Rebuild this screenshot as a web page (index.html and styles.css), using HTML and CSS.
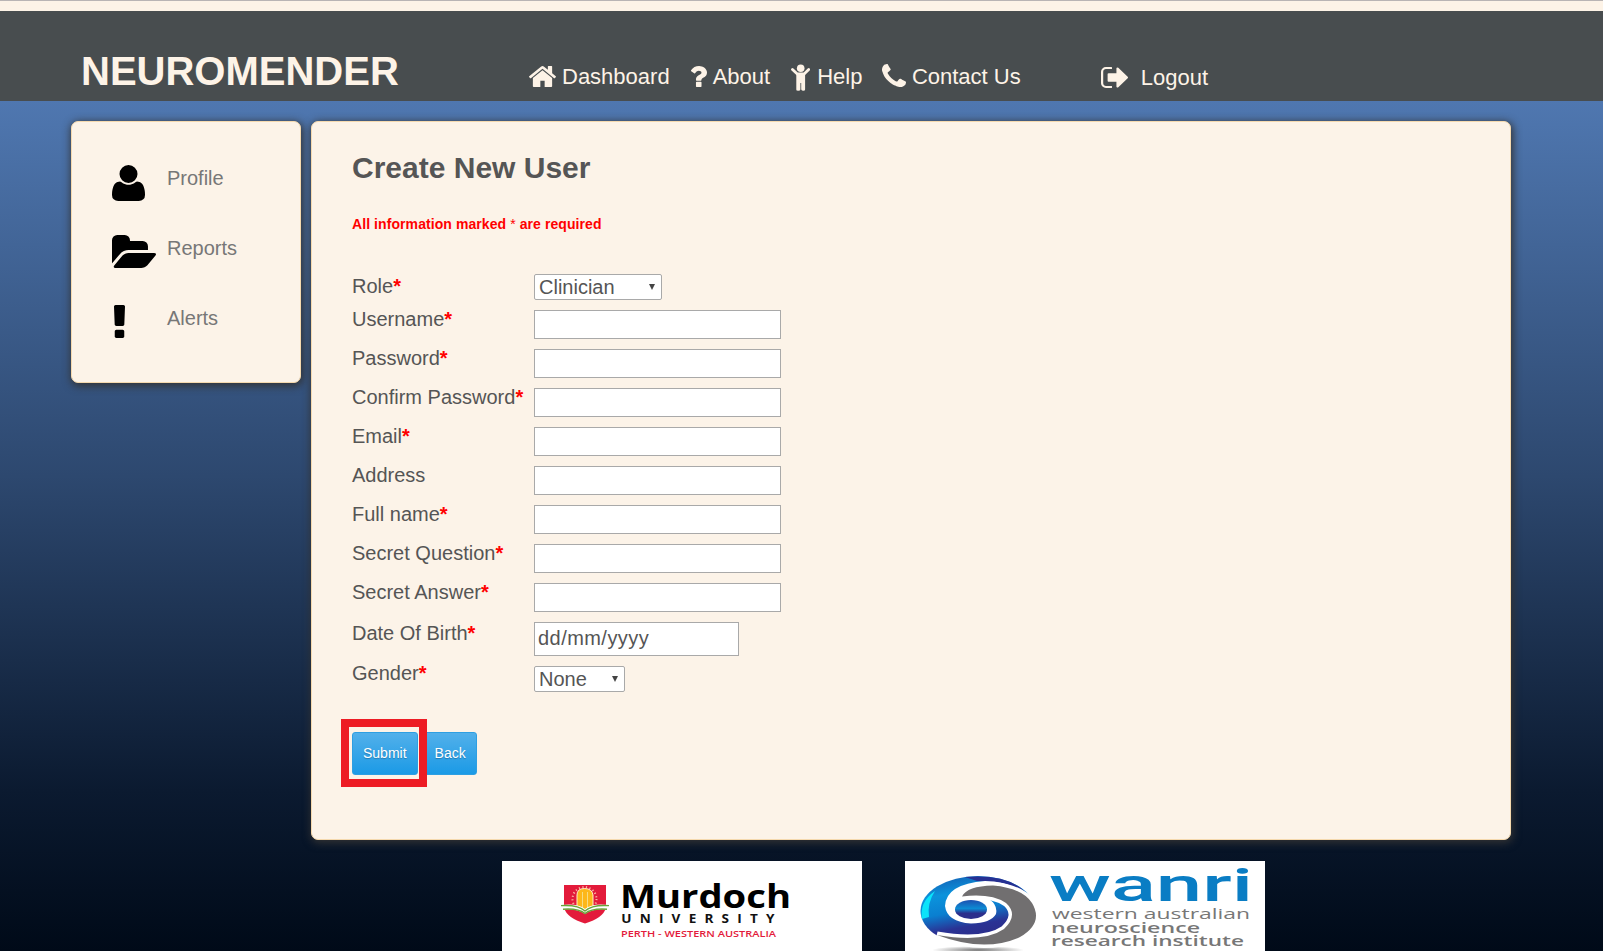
FILE: index.html
```html
<!DOCTYPE html>
<html lang="en">
<head>
<meta charset="utf-8">
<title>Neuromender - Create New User</title>
<link rel="stylesheet" href="styles.css">
</head>
<body>
<header class="header">
  <h1 class="brand">NEUROMENDER</h1>
  <nav class="nav">
    <a class="nav-item"><svg class="ico-home" viewBox="89 253 1614 1283" preserveAspectRatio="none"><path d="M1472 992v480q0 26-19 45t-45 19h-384v-384h-256v384h-384q-26 0-45-19t-19-45v-480q0-1 .5-3t.5-3l575-474 575 474q1 2 1 6zm223-69l-62 74q-8 9-21 11h-3q-13 0-21-7l-692-577-692 577q-12 8-24 7-13-2-21-11l-62-74q-8-10-7-23.5t11-21.5l719-599q32-26 76-26t76 26l244 204v-195q0-14 9-23t23-9h192q14 0 23 9t9 23v408l219 182q10 8 11 21.5t-7 23.5z"/></svg><span>Dashboard</span></a>
    <a class="nav-item"><svg class="ico-question" viewBox="482 256 922 1280" preserveAspectRatio="none"><path d="M1088 1256v240q0 16-12 28t-28 12h-240q-16 0-28-12t-12-28v-240q0-16 12-28t28-12h240q16 0 28 12t12 28zm316-600q0 54-15.500 101t-35 76.500-55 59.500-57.500 43.500-61 35.500q-41 23-68.500 65t-27.500 67q0 17-12 32.500t-28 15.500h-240q-15 0-25.500-18.500t-10.500-37.500v-45q0-83 65-156.500t143-108.500q59-27 84-56t25-76q0-42-46.500-74t-107.500-32q-65 0-108 29-35 25-107 115-13 16-31 16-12 0-25-8l-164-125q-13-10-15.500-25t5.500-28q160-266 464-266 80 0 161 31t146 83 106 127.500 41 158.500z"/></svg><span>About</span></a>
    <a class="nav-item"><svg class="ico-child" viewBox="0 0 19 27"><circle cx="9.700" cy="4.300" r="3.800"/><path d="M1.500 5.400 6.300 9.900H13.100L17.700 5.400" fill="none" stroke="#fdf3e7" stroke-width="2.800" stroke-linecap="round" stroke-linejoin="round"/><path d="M5.300 9H14.100V25.500Q14.100 26.700 12.400 26.700T10.200 25.500V19H9.400V25.500Q9.400 26.700 7.200 26.700T5.300 25.500Z"/></svg><span>Help</span></a>
    <a class="nav-item"><svg class="ico-phone" viewBox="192 128 1408 1408" preserveAspectRatio="none"><path d="M1600 1240q0 27-10 70.500t-21 68.500q-21 50-122 106-94 51-186 51-27 0-52.500-3.500t-57.500-12.500-47.500-14.500-55.500-20.500-49-18q-98-35-175-83-128-79-264.500-215.500t-215.500-264.500q-48-77-83-175-3-9-18-49t-20.500-55.500-14.500-47.500-12.500-57.500-3.500-52.500q0-92 51-186 56-101 106-122 25-11 68.500-21t70.500-10q14 0 21 3 18 6 53 76 11 19 30 54t35 63.500 31 53.500q3 4 17.500 25t21.500 35.500 7 28.500q0 20-28.500 50t-62 55-62 53-28.500 46q0 9 5 22.500t8.500 20.500 14 24 11.500 19q76 137 174 235t235 174q2 1 19 11.500t24 14 20.500 8.500 22.500 5q18 0 46-28.500t53-62 55-62 50-28.500q14 0 28.500 7t35.500 21.500 25 17.500q25 15 53.500 31t63.500 35 54 30q70 35 76 53 3 7 3 21z"/></svg><span>Contact Us</span></a>
    <a class="nav-item logout"><svg class="ico-out" viewBox="64 256 1568 1280" preserveAspectRatio="none"><path d="M704 1440q0 4 1 20t.5 26.500-3 23.500-10 19.500-20.500 6.500h-320q-119 0-203.500-84.500t-84.500-203.500v-704q0-119 84.500-203.500t203.500-84.500h320q13 0 22.500 9.500t9.500 22.500q0 4 1 20t.5 26.500-3 23.500-10 19.500-20.500 6.500h-320q-66 0-113 47t-47 113v704q0 66 47 113t113 47h312l11.500 1 11.500 3 8 5.500 7 9 2 13.500zm928-544q0 26-19 45l-544 544q-19 19-45 19t-45-19-19-45v-288h-448q-26 0-45-19t-19-45v-384q0-26 19-45t45-19h448v-288q0-26 19-45t45-19 45 19l544 544q19 19 19 45z"/></svg><span>Logout</span></a>
  </nav>
</header>

<div class="columns">
  <aside class="panel sidebar">
    <a class="side-item"><span class="side-icon"><svg class="ico-user" viewBox="192 128 1408 1536" preserveAspectRatio="none"><path d="M1600 1405q0 120-73 189.500t-194 69.500h-874q-121 0-194-69.500t-73-189.500q0-53 3.500-103.500t14-109 26.500-108.500 43-97.500 62-81 85.500-53.500 111.500-20q9 0 42 21.500t74.500 48 108 48 133.500 21.500 133.500-21.500 108-48 74.500-48 42-21.500q61 0 111.500 20t85.500 53.500 62 81 43 97.500 26.500 108.500 14 109 3.500 103.500zm-320-893q0 159-112.500 271.500t-271.500 112.500-271.500-112.500-112.500-271.500 112.500-271.500 271.500-112.500 271.500 112.500 112.500 271.500z"/></svg></span><span>Profile</span></a>
    <a class="side-item"><span class="side-icon"><svg class="ico-folder" viewBox="0 128 1879 1408" preserveAspectRatio="none"><path d="M1879 952q0 31-31 66l-336 396q-43 51-120.500 86.500t-143.500 35.500h-1088q-34 0-60.500-13t-26.500-43q0-31 31-66l336-396q43-51 120.500-86.500t143.500-35.500h1088q34 0 60.500 13t26.500 43z"/><path d="M1536 608v160h-832q-94 0-197 47.500t-164 119.500l-337 396-5 6q0-4-.5-12.500t-.5-12.500v-960q0-92 66-158t158-66h320q92 0 158 66t66 158v32h544q92 0 158 66t66 158z"/></svg></span><span>Reports</span></a>
    <a class="side-item"><span class="side-icon"><svg class="ico-alert" viewBox="674 128 444 1408" preserveAspectRatio="none"><path d="M1088 1248v224q0 26-19 45t-45 19h-256q-26 0-45-19t-19-45v-224q0-26 19-45t45-19h256q26 0 45 19t19 45zm30-1056l-28 768q-1 26-20.500 45t-45.500 19h-256q-26 0-45.500-19t-20.500-45l-28-768q-1-26 17.500-45t44.500-19h320q26 0 44.500 19t17.500 45z"/></svg></span><span>Alerts</span></a>
  </aside>

  <main class="panel main">
    <h2 class="title">Create New User</h2>
    <p class="notice">All information marked <span class="plain">*</span> are required</p>
    <form class="form">
      <div class="row role"><label>Role<b>*</b></label><div class="select">Clinician<svg viewBox="0 0 6 6"><path d="M0 0H6L3 6Z"/></svg></div></div>
      <div class="row"><label>Username<b>*</b></label><input class="text" type="text"></div>
      <div class="row"><label>Password<b>*</b></label><input class="text" type="password"></div>
      <div class="row"><label>Confirm Password<b>*</b></label><input class="text" type="password"></div>
      <div class="row"><label>Email<b>*</b></label><input class="text" type="text"></div>
      <div class="row"><label>Address</label><input class="text" type="text"></div>
      <div class="row"><label>Full name<b>*</b></label><input class="text" type="text"></div>
      <div class="row"><label>Secret Question<b>*</b></label><input class="text" type="text"></div>
      <div class="row"><label>Secret Answer<b>*</b></label><input class="text" type="text"></div>
      <div class="row dob"><label>Date Of Birth<b>*</b></label><div class="date">dd/mm/yyyy</div></div>
      <div class="row gender"><label>Gender<b>*</b></label><div class="select short">None<svg viewBox="0 0 6 6"><path d="M0 0H6L3 6Z"/></svg></div></div>
      <div class="buttons"><button class="btn marked" type="button">Submit</button><button class="btn" type="button">Back</button></div>
    </form>
  </main>
</div>

<footer class="logos">
  <svg class="logo" viewBox="0 0 360 120">
    <path d="M62 24H104V47Q101 57 83 62.500Q65 57 62 47Z" fill="#e31b3b"/>
    <circle cx="82.500" cy="38" r="12" fill="none" stroke="#f6b8a0" stroke-width="2" stroke-dasharray="1.200 2.400"/>
    <path d="M75 47V34Q75 27.500 82.500 27.500T91 34V47L83 51Z" fill="#fdb71a" stroke="#fff0c8" stroke-width="1"/>
    <path d="M80.500 31V47M85.500 31V47" stroke="#f7dc83" stroke-width="1"/>
    <path d="M59 44Q76 42 83 48Q90 42 107 44L105 48.500Q91 47 83 53Q75 47 61 48.500Z" fill="#fff"/>
    <path d="M59 44.600Q76 43.500 83 50Q90 43.500 107 44.600M61 48.200Q76 47 83 52.500Q90 47 105 48.200" fill="none" stroke="#6aa63a" stroke-width="1.400"/>
    <text class="murdoch" x="118" y="47" textLength="171" lengthAdjust="spacingAndGlyphs">Murdoch</text>
    <text class="university" x="101" y="62.500" textLength="130" lengthAdjust="spacing" transform="scale(1.180 1)">UNIVERSITY</text>
    <text class="perth" x="119" y="76" textLength="155" lengthAdjust="spacingAndGlyphs">PERTH - WESTERN AUSTRALIA</text>
  </svg>
  <svg class="logo" viewBox="0 0 360 120">
    <defs>
      <linearGradient id="iris" x1="0.200" y1="0" x2="0.500" y2="1"><stop offset="0" stop-color="#1560b4"/><stop offset=".25" stop-color="#0b93dc"/><stop offset=".5" stop-color="#0a7fd0"/><stop offset=".72" stop-color="#2a3294"/><stop offset="1" stop-color="#2c2a83"/></linearGradient>
      <linearGradient id="pupil" x1="0" y1="0" x2="0" y2="1"><stop offset="0" stop-color="#1d50b0"/><stop offset=".45" stop-color="#0c8bd4"/><stop offset=".7" stop-color="#2c2f8c"/></linearGradient>
      <radialGradient id="ground"><stop offset="0" stop-color="#777"/><stop offset="1" stop-color="#fff"/></radialGradient>
    </defs>
    <ellipse cx="73" cy="89" rx="46" ry="4" fill="url(#ground)"/>
    <ellipse cx="73" cy="50" rx="57.500" ry="35" fill="url(#iris)"/>
    <path d="M17 58Q14 41 30 30Q22 42 24 56Z" fill="#0be3fa"/>
    <path d="M60 16Q112 12 127 40Q108 21 72 20Z" fill="#263092"/>
    <path d="M128 40Q109 20 80 20Q41 23 40 45Q42 61 66 62.500Q86 62 91 53Q93 44 84 38L128 50Z" fill="#fff"/>
    <path d="M57 35.500Q62 25 88 24.500Q117 27 127 42Q139 62 115 76Q80 92 32 74Q79 82 99 68Q114 54 101 42Q86 32 57 35.500Z" fill="#716f70" stroke="#fff" stroke-width="7" paint-order="stroke"/>
    <ellipse cx="66" cy="48.500" rx="16" ry="9.500" fill="url(#pupil)"/>
    <text class="wanri" x="144" y="40" textLength="204" lengthAdjust="spacingAndGlyphs">wanri</text>
    <text class="tag" x="147" y="58" textLength="198" lengthAdjust="spacingAndGlyphs">western australian</text>
    <text class="tag bold" x="146" y="71.500" textLength="149" lengthAdjust="spacingAndGlyphs">neuroscience</text>
    <text class="tag bold" x="146" y="85" textLength="193" lengthAdjust="spacingAndGlyphs">research institute</text>
  </svg>
</footer>
</body>
</html>
```

FILE: styles.css
```css
* { box-sizing: border-box; }
html { background: #000a17; }
body {
  margin: 0;
  height: 951px;
  overflow: hidden;
  border-top: 1px solid #b9b4b4;
  font: 20px/23px "Liberation Sans", Arial, sans-serif;
  color: #555;
  background: linear-gradient(#4f77b0 100px, #2d486f 475px, #0b1a30 790px, #000a18 950px);
}
h1, h2, p { margin: 0; }
svg { display: block; flex: none; }

.header {
  height: 100px;
  border-top: 10px solid #fdf3e7;
  background: #484d4f;
  color: #fdf3e7;
  display: flex;
  align-items: flex-start;
  padding-left: 81px;
}
.header svg { fill: #fdf3e7; }
.brand { width: 448px; font-size: 40px; line-height: 46px; padding-top: 37px; }
.nav { display: flex; height: 90px; padding-top: 53px; font-size: 22px; line-height: 25px; }
.nav-item { display: flex; align-items: flex-start; white-space: nowrap; }
.ico-home { width: 27px; height: 21px; margin: 2px 6px 0 0; }
.ico-question { width: 16px; height: 21px; margin: 2px 6px 0 21px; }
.ico-child { width: 19px; height: 27px; margin: 0 7px 0 21px; }
.ico-phone { width: 24px; height: 23px; margin: 0 5.5px 0 20px; }
.ico-out { width: 27px; height: 21px; margin: 2px 13px 0 80px; }
.logout { padding-top: 1px; }

.columns { display: flex; align-items: flex-start; gap: 10px; padding: 20px 0 0 71px; }
.panel {
  background: #fcf3e8;
  border: 1px solid #f5d9ae;
  border-radius: 7px;
  box-shadow: 1px 2px 8px 1px #333;
}
.sidebar { width: 230px; height: 262px; padding: 43px 0 0 40px; display: flex; flex-direction: column; gap: 34px; color: #777; }
.side-item { display: flex; height: 36px; }
.side-icon { width: 55px; fill: #000; }
.ico-user { width: 33px; height: 36px; }
.ico-folder { width: 44px; height: 33px; }
.ico-alert { width: 11px; height: 33px; margin-left: 2px; }
.side-item > span:last-child { padding-top: 2px; }

.main { width: 1200px; height: 719px; padding: 29px 0 0 40px; }
.title { font-size: 30px; line-height: 34px; }
.notice { margin-top: 31px; font-size: 14px; line-height: 16px; font-weight: bold; color: #f00; letter-spacing: .08px; }
.plain { font-weight: normal; }
.form { margin-top: 42px; }
.row { display: grid; grid-template-columns: 182px auto; justify-content: start; align-items: start; height: 39px; }
.row label { margin-top: -2px; }
.row b { color: #f00; }
.role { height: 36px; }
.role label { margin-top: 1px; }
.dob { height: 44px; }
.dob label { margin-top: 0; }
.gender { height: 26px; }
.gender label { margin-top: -4px; }
.text, .date, .select { background: #fff; border: 1px solid #a9a9a9; }
.text { width: 247px; height: 29px; padding: 2px; font: inherit; }
.date { width: 205px; height: 34px; padding: 4px 3px; letter-spacing: .45px; }
.select { display: flex; align-items: center; justify-content: space-between; width: 128px; height: 26px; padding: 1px 6px 1px 4px; border-radius: 2px; }
.select svg { width: 6px; height: 6px; fill: #444; }
.short { width: 91px; }
.buttons { display: flex; gap: 6px; margin-top: 40px; }
.btn {
  height: 43px;
  padding: 0 10px 2px;
  border: 1px solid #2e9fe2;
  border-radius: 3px;
  background: linear-gradient(#52b0ea, #1b9ae6);
  color: #fff;
  font: 14px "Liberation Sans", Arial, sans-serif;
  text-shadow: 0 1px 1px rgba(0, 0, 0, .25);
}
.marked { position: relative; }
.marked::after { content: ""; box-sizing: border-box; position: absolute; z-index: 1; left: -12px; top: -14px; width: 86px; height: 68px; border: 8px solid #ed1c24; }

.logos { display: flex; gap: 43px; padding: 21px 0 0 502px; }
.logo { width: 360px; height: 120px; background: #fff; }
.murdoch { font: bold 32px "Open Sans", sans-serif; fill: #000; }
.university { font: bold 11.5px "Open Sans", sans-serif; fill: #111; }
.perth { font: 600 9px "Open Sans", sans-serif; fill: #e31b3b; }
.wanri { font: 500 47px Roboto, sans-serif; fill: #0a7dc4; }
.tag { font: 15px "Open Sans", sans-serif; fill: #777; }
.tag.bold { font-weight: 600; }
```
